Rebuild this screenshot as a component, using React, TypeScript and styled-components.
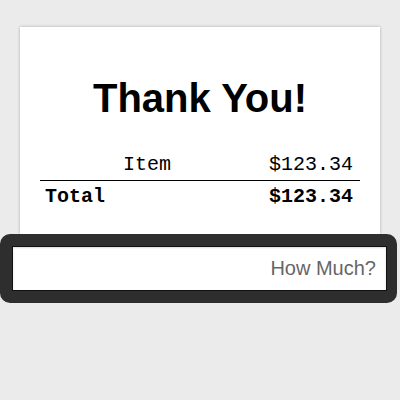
import React from "react";
import styled, { createGlobalStyle } from "styled-components";

const Global = createGlobalStyle`
  html, body { margin: 0; padding: 0; background: #ebebeb; }
  body { font-family: "Liberation Sans", Arial, sans-serif; }
`;

const Page = styled.div`
  padding-top: 27px;
`;

const Card = styled.div`
  margin: 0 20px;
  height: 207px;
  box-sizing: border-box;
  padding: 47px 20px 0;
  background: #fff;
  box-shadow: 0 0 3px rgba(0, 0, 0, 0.25);
`;

const Title = styled.h1`
  margin: 0;
  font: bold 40px/48px "Liberation Sans", Arial, sans-serif;
  text-align: center;
  color: #000;
`;

const Table = styled.div`
  margin-top: 31px;
  font-family: "Liberation Mono", "Courier New", monospace;
  font-size: 20px;
  line-height: 24px;
  color: #000;
`;

const Row = styled.div<{ $total?: boolean }>`
  display: grid;
  grid-template-columns: 214px 1fr;
  padding: ${(p) => (p.$total ? "4px 0 0" : "0 0 3px")};
  border-bottom: ${(p) => (p.$total ? "none" : "1px solid #000")};
  font-weight: ${(p) => (p.$total ? "bold" : "normal")};
`;

const Label = styled.div<{ $align: "left" | "center" }>`
  text-align: ${(p) => p.$align};
  padding-left: ${(p) => (p.$align === "left" ? "5px" : "0")};
`;

const Amount = styled.div`
  text-align: right;
  padding-right: 7px;
`;

const Bar = styled.div`
  width: 397px;
  box-sizing: border-box;
  padding: 12px 10px 12px 12px;
  background: #2e2e2e;
  border-radius: 10px;
`;

const Input = styled.input`
  display: block;
  width: 100%;
  height: 45px;
  box-sizing: border-box;
  margin: 0;
  border: 1px solid #111;
  background: #fff;
  box-shadow: inset 0 1px 2px rgba(0, 0, 0, 0.15);
  padding: 0 10px;
  font: 20px "Liberation Sans", Arial, sans-serif;
  text-align: right;
  outline: none;
  &::placeholder { color: #666; opacity: 1; }
`;

export default function App() {
  return (
    <Page>
      <Global />
      <Card>
        <Title>Thank You!</Title>
        <Table>
          <Row>
            <Label $align="center">Item</Label>
            <Amount>$123.34</Amount>
          </Row>
          <Row $total>
            <Label $align="left">Total</Label>
            <Amount>$123.34</Amount>
          </Row>
        </Table>
      </Card>
      <Bar>
        <Input placeholder="How Much?" />
      </Bar>
    </Page>
  );
}
